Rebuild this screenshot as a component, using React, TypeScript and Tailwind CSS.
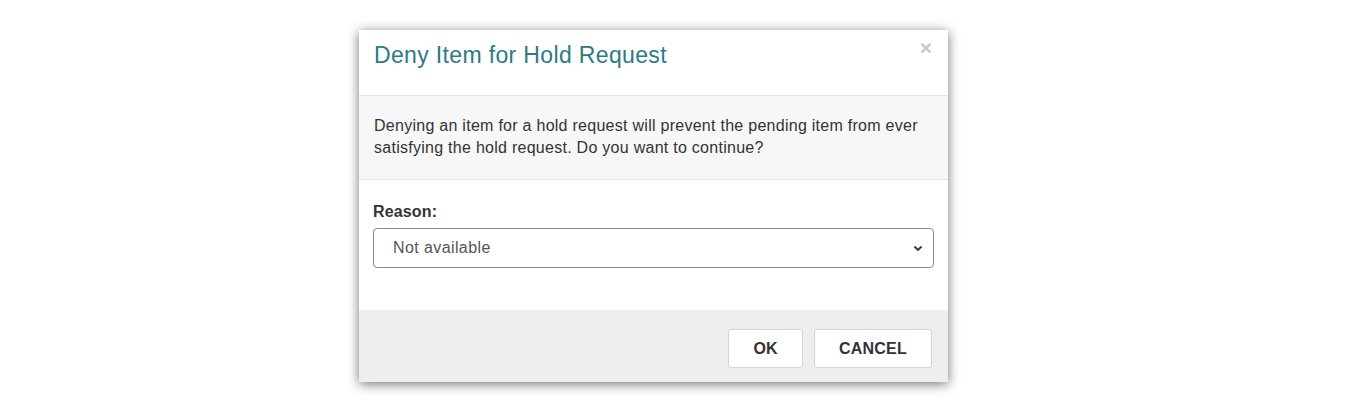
export default function App() {
    return (
        <div className="w-full h-[411px] bg-white pl-[359px] pt-[30px] font-['Liberation_Sans',Arial,sans-serif] text-[#333]">
            <div className="w-[589px] bg-white shadow-[0_2px_11px_rgba(0,0,0,0.55)]">
                {/* Header */}
                <div className="h-[66px] px-[15px] pt-[12px] border-b border-[#e5e5e5] flex items-start justify-between">
                    <h2 className="text-[23px] leading-[26px] tracking-[0.35px] text-[#2b7a86]">Deny Item for Hold Request</h2>
                    <button className="text-[21px] leading-[20px] font-bold text-[#c8c8c8] mr-[1px] mt-[-4px]">×</button>
                </div>

                {/* Warning text */}
                <div className="bg-[#f7f7f7] px-[15px] pt-[19px] pb-[20px] border-b border-[#e5e5e5]">
                    <p className="text-[16px] leading-[22px] tracking-[0.27px]">
                        Denying an item for a hold request will prevent the pending item from ever
                        <br />
                        satisfying the hold request. Do you want to continue?
                    </p>
                </div>

                {/* Reason */}
                <div className="px-[14px] pt-[23px] pb-[42px]">
                    <label className="block text-[16px] leading-[17px] font-bold tracking-[0.15px]">Reason:</label>
                    <div className="mt-[8px] h-[40px] rounded-[4px] border border-[#8a8a8a] flex items-center justify-between pl-[19px] pr-[10px]">
                        <span className="text-[16px] tracking-[0.4px] text-[#555]">Not available</span>
                        <svg width="10" height="7" viewBox="0 0 10 7" fill="none">
                            <polyline points="1.5,1.5 5,5 8.5,1.5" stroke="#333" strokeWidth="1.8" />
                        </svg>
                    </div>
                </div>

                {/* Footer */}
                <div className="h-[72px] bg-[#eeeeee] flex justify-end items-start gap-[11px] pr-[16px] pt-[19px]">
                    <button className="w-[75px] h-[39px] bg-white border border-[#d4d4d4] rounded-[3px] text-[16px] font-bold text-[#333]">
                        OK
                    </button>
                    <button className="w-[118px] h-[39px] bg-white border border-[#d4d4d4] rounded-[3px] text-[16px] font-bold tracking-[0.2px] text-[#333]">
                        CANCEL
                    </button>
                </div>
            </div>
        </div>
    );
}
